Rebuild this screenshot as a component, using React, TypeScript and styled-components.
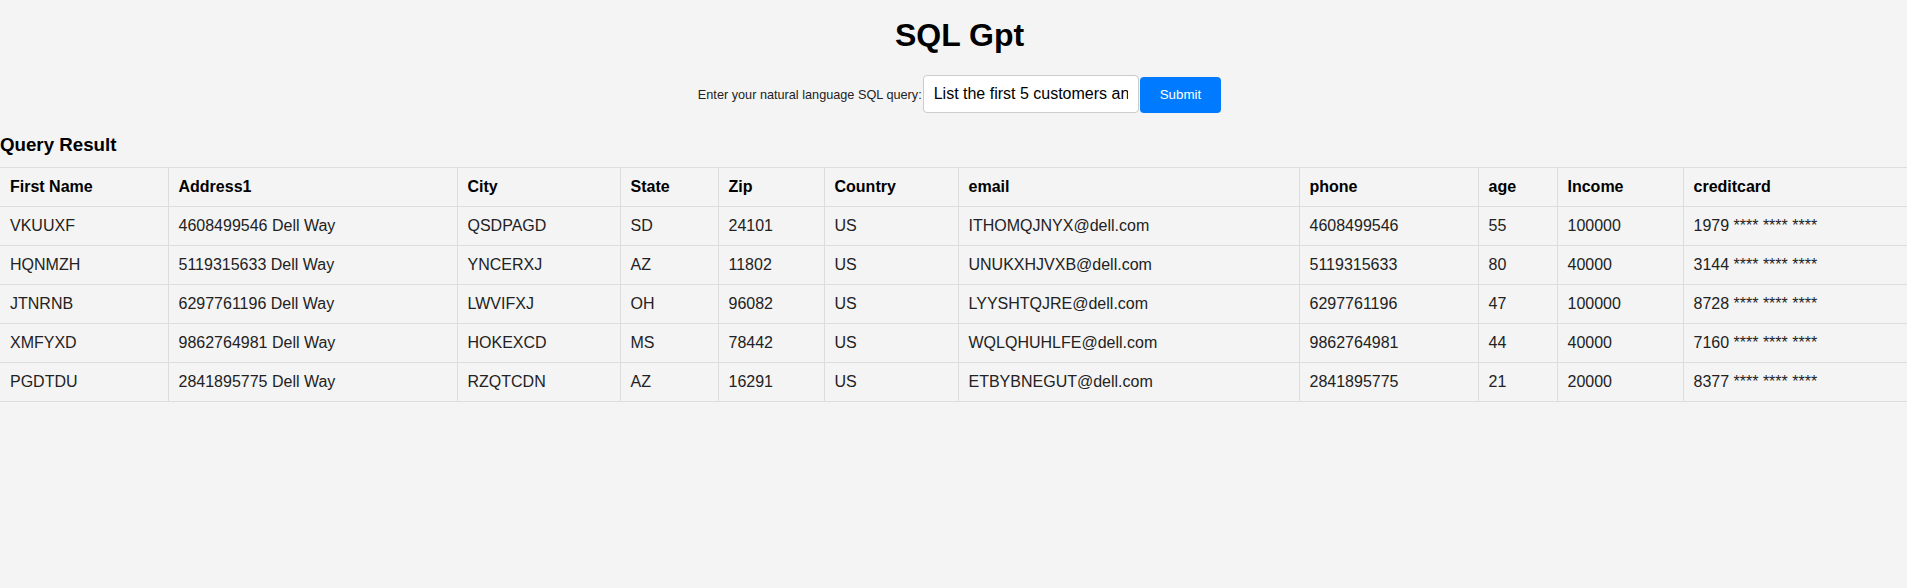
import React from "react";
import styled, { createGlobalStyle } from "styled-components";

const GlobalStyle = createGlobalStyle`
  html, body {
    margin: 0;
    padding: 0;
    background: #f4f4f4;
    overflow: hidden;
  }
  body {
    font-family: "Liberation Sans", Arial, Helvetica, sans-serif;
    color: #000;
  }
`;

const Page = styled.div`
  width: 1919px;
`;

const Title = styled.h1`
  margin: 17px 0 21px;
  font-size: 32px;
  line-height: 37px;
  font-weight: bold;
  text-align: center;
`;

const QueryForm = styled.form`
  display: flex;
  justify-content: center;
  align-items: baseline;
`;

const Label = styled.label`
  font-size: 12.7px;
  color: #222;
  margin-right: 1px;
`;

const QueryInput = styled.input`
  box-sizing: border-box;
  width: 216px;
  height: 38px;
  padding: 9px 10px;
  font-family: inherit;
  font-size: 16px;
  line-height: 18px;
  color: #000;
  background: #fff;
  border: 1px solid #ccc;
  border-radius: 4px;
  outline: none;
`;

const SubmitButton = styled.button`
  margin-left: 1px;
  padding: 10px 20px;
  font-family: inherit;
  font-size: 13.33px;
  line-height: 15.5px;
  color: #fff;
  background: #007bff;
  border: none;
  border-radius: 4px;
  cursor: pointer;
`;

const SectionTitle = styled.h3`
  margin: 21px 0 11px;
  font-size: 18.72px;
  line-height: 21.5px;
  font-weight: bold;
`;

const Table = styled.table`
  width: 1919px;
  table-layout: fixed;
  border-collapse: collapse;
  font-size: 16px;
  line-height: 18px;
`;

const HeadCell = styled.th`
  padding: 10px;
  text-align: left;
  font-weight: bold;
  color: #000;
  border: 1px solid #ddd;
  white-space: nowrap;

  &:first-child {
    border-left: none;
  }
`;

const Cell = styled.td`
  padding: 10px;
  text-align: left;
  color: #222;
  border: 1px solid #ddd;
  white-space: nowrap;

  &:first-child {
    border-left: none;
  }
`;

type Column = { key: string; label: string; width: number };

const columns: Column[] = [
  { key: "first", label: "First Name", width: 168 },
  { key: "address", label: "Address1", width: 289 },
  { key: "city", label: "City", width: 163 },
  { key: "state", label: "State", width: 98 },
  { key: "zip", label: "Zip", width: 106 },
  { key: "country", label: "Country", width: 134 },
  { key: "email", label: "email", width: 341 },
  { key: "phone", label: "phone", width: 179 },
  { key: "age", label: "age", width: 79 },
  { key: "income", label: "Income", width: 126 },
  { key: "card", label: "creditcard", width: 236 },
];

const rows: string[][] = [
  ["VKUUXF", "4608499546 Dell Way", "QSDPAGD", "SD", "24101", "US", "ITHOMQJNYX@dell.com", "4608499546", "55", "100000", "1979 **** **** ****"],
  ["HQNMZH", "5119315633 Dell Way", "YNCERXJ", "AZ", "11802", "US", "UNUKXHJVXB@dell.com", "5119315633", "80", "40000", "3144 **** **** ****"],
  ["JTNRNB", "6297761196 Dell Way", "LWVIFXJ", "OH", "96082", "US", "LYYSHTQJRE@dell.com", "6297761196", "47", "100000", "8728 **** **** ****"],
  ["XMFYXD", "9862764981 Dell Way", "HOKEXCD", "MS", "78442", "US", "WQLQHUHLFE@dell.com", "9862764981", "44", "40000", "7160 **** **** ****"],
  ["PGDTDU", "2841895775 Dell Way", "RZQTCDN", "AZ", "16291", "US", "ETBYBNEGUT@dell.com", "2841895775", "21", "20000", "8377 **** **** ****"],
];

export default function App() {
  return (
    <Page>
      <GlobalStyle />
      <Title>SQL Gpt</Title>
      <QueryForm onSubmit={(e) => e.preventDefault()}>
        <Label htmlFor="query">Enter your natural language SQL query:</Label>
        <QueryInput
          id="query"
          type="text"
          defaultValue="List the first 5 customers and their details"
        />
        <SubmitButton type="submit">Submit</SubmitButton>
      </QueryForm>
      <SectionTitle>Query Result</SectionTitle>
      <Table>
        <colgroup>
          {columns.map((c) => (
            <col key={c.key} style={{ width: c.width }} />
          ))}
        </colgroup>
        <thead>
          <tr>
            {columns.map((c) => (
              <HeadCell key={c.key}>{c.label}</HeadCell>
            ))}
          </tr>
        </thead>
        <tbody>
          {rows.map((r, i) => (
            <tr key={i}>
              {r.map((v, j) => (
                <Cell key={j}>{v}</Cell>
              ))}
            </tr>
          ))}
        </tbody>
      </Table>
    </Page>
  );
}
